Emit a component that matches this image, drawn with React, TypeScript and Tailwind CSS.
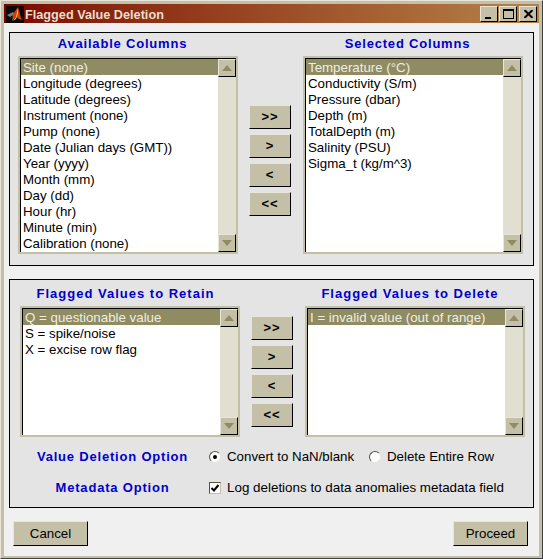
import type { ReactNode } from 'react'

const columns = [
  'Site (none)',
  'Longitude (degrees)',
  'Latitude (degrees)',
  'Instrument (none)',
  'Pump (none)',
  'Date (Julian days (GMT))',
  'Year (yyyy)',
  'Month (mm)',
  'Day (dd)',
  'Hour (hr)',
  'Minute (min)',
  'Calibration (none)',
]
const selected = [
  'Temperature (°C)',
  'Conductivity (S/m)',
  'Pressure (dbar)',
  'Depth (m)',
  'TotalDepth (m)',
  'Salinity (PSU)',
  'Sigma_t (kg/m^3)',
]
const retain = ['Q = questionable value', 'S = spike/noise', 'X = excise row flag']
const remove = ['I = invalid value (out of range)']

function Raised({ className, children }: { className: string; children?: ReactNode }) {
  return (
    <div className={`flex items-center justify-center bg-[#c4c0a8] border border-t-[#e8e6da] border-l-[#e8e6da] border-r-black border-b-black ${className}`}>
      {children}
    </div>
  )
}

function ListBox({ items, className }: { items: string[]; className: string }) {
  return (
    <div className={`border-2 border-[#c4c0a8] bg-white flex ${className}`}>
      <div className="flex-1 border-l border-t border-black min-w-0 overflow-hidden">
        {items.map((item, i) => (
          <div
            key={item}
            className={`h-4 leading-[18px] pl-[2px] text-[13.3px] whitespace-nowrap ${i === 0 ? 'bg-[#8f8b63] text-[#f0eee0]' : 'text-black'}`}
          >
            {item}
          </div>
        ))}
      </div>
      <div className="w-[18px] bg-[#e0dfd0] flex flex-col justify-between border-t border-black">
        <Raised className="h-[18px] w-[18px]">
          <svg width="10" height="6" viewBox="0 0 10 6"><path d="M5 0L10 6H0Z" fill="#8f8b63" /></svg>
        </Raised>
        <Raised className="h-[18px] w-[18px]">
          <svg width="10" height="6" viewBox="0 0 10 6"><path d="M0 0H10L5 6Z" fill="#8f8b63" /></svg>
        </Raised>
      </div>
    </div>
  )
}

function Heading({ children, className = '' }: { children: ReactNode; className?: string }) {
  return <div className={`text-center font-bold text-[13px] leading-4 text-[#0000cc] whitespace-nowrap ${className}`}>{children}</div>
}

function Arrows({ className }: { className: string }) {
  return (
    <div className={`flex flex-col gap-[5px] w-[42px] ${className}`}>
      {['>>', '>', '<', '<<'].map((a) => (
        <Raised key={a} className="h-6 w-[42px] font-bold text-[13px] text-black tracking-[1px]">
          {a}
        </Raised>
      ))}
    </div>
  )
}

function MatlabIcon() {
  return (
    <svg width="18" height="17" viewBox="0 0 18 17" className="shrink-0">
      <rect width="18" height="17" fill="#0a0a0a" />
      <path d="M1 9L7 6L9 8L4 11Z" fill="#6f7f88" />
      <path d="M7 8L12 1L15 12L17 14L13 13L10 11L6 15Z" fill="#d23c10" />
      <path d="M12 2L10 11L7 15L10 13L12 7Z" fill="#f4e020" />
    </svg>
  )
}

export default function App() {
  return (
    <div
      className="w-[543px] h-[559px] flex flex-col bg-[#c4c0a8] border-t border-l border-t-[#e8e6da] border-l-[#e8e6da] border-r border-b border-r-[#404040] border-b-[#404040] p-[3px] pb-[2px] overflow-hidden"
      style={{ fontFamily: '"Liberation Sans", Arial, sans-serif' }}
    >
      <div className="h-[19px] shrink-0 flex items-center pt-[1px] pl-[2px] pr-[2px] gap-[1px] bg-gradient-to-r from-[#7c0000] to-[#b58248]">
        <MatlabIcon />
        <span className="flex-1 font-bold text-[12.7px] leading-[18px] pt-[1px] text-[#e8dfcc]">Flagged Value Deletion</span>
        <div className="flex gap-[1px]">
          <Raised className="h-[16px] w-[18px]">
            <span className="w-[6px] h-[2px] bg-black mt-[7px] -ml-[2px]" />
          </Raised>
          <Raised className="h-[16px] w-[18px]">
            <span className="w-[11px] h-[10px] border border-t-2 border-black" />
          </Raised>
          <Raised className="h-[16px] w-[18px] ml-[1px]">
            <svg width="9" height="8" viewBox="0 0 9 8"><path d="M0.5 0L8.5 8M8.5 0L0.5 8" stroke="#000" strokeWidth="2" /></svg>
          </Raised>
        </div>
      </div>

      <div className="flex-1 bg-[#f0f0f0] px-[5px] pt-[9px] flex flex-col">
        <div className="h-[234px] border border-black bg-[#e4e4e4] pl-[8px] pt-[3px] grid grid-cols-[220px_65px_220px] pr-[8px]">
          <div className="flex flex-col">
            <Heading className="h-[20px] pr-[11px] tracking-[0.8px]">Available Columns</Heading>
            <ListBox items={columns} className="h-[198px]" />
          </div>
          <Arrows className="ml-[11px] mt-[69px]" />
          <div className="flex flex-col">
            <Heading className="h-[20px] pr-[11px] tracking-[0.8px]">Selected Columns</Heading>
            <ListBox items={selected} className="h-[198px]" />
          </div>
        </div>

        <div className="h-[229px] mt-[13px] border border-black bg-[#e4e4e4] pl-[10px] pr-[6px] pt-[6px]">
          <div className="grid grid-cols-[220px_65px_220px]">
            <div className="flex flex-col">
              <Heading className="h-[20px] pr-[9px] tracking-[1px]">Flagged Values to Retain</Heading>
              <ListBox items={retain} className="h-[131px]" />
            </div>
            <Arrows className="ml-[11px] mt-[30px]" />
            <div className="flex flex-col">
              <Heading className="h-[20px] pr-[10px] tracking-[1px]">Flagged Values to Delete</Heading>
              <ListBox items={remove} className="h-[131px]" />
            </div>
          </div>

          <div className="flex items-center h-[16px] mt-[12px]">
            <Heading className="w-[184px] -ml-[2px] pl-[5px] tracking-[0.8px]">Value Deletion Option</Heading>
            <span className="ml-[7px] w-[12px] h-[12px] rounded-full bg-white border border-t-[#55533f] border-l-[#55533f] border-r-[#e8e6da] border-b-[#e8e6da] flex items-center justify-center">
              <span className="w-[4px] h-[4px] rounded-full bg-black" />
            </span>
            <span className="ml-[6px] w-[142px] text-[13.3px] text-black">Convert to NaN/blank</span>
            <span className="w-[12px] h-[12px] rounded-full bg-white border border-t-[#55533f] border-l-[#55533f] border-r-[#e8e6da] border-b-[#e8e6da]" />
            <span className="ml-[6px] text-[13.3px] text-black">Delete Entire Row</span>
          </div>
          <div className="flex items-center h-[16px] mt-[15px]">
            <Heading className="w-[184px] -ml-[2px] pl-[5px] tracking-[0.8px]">Metadata Option</Heading>
            <span className="ml-[7px] w-[12px] h-[12px] bg-white border border-t-[#55533f] border-l-[#55533f] border-r-[#c4c0a8] border-b-[#c4c0a8] flex items-center justify-center">
              <svg width="8" height="8" viewBox="0 0 8 8"><path d="M0.5 4L3 6.5L7.5 1" fill="none" stroke="#000" strokeWidth="2" /></svg>
            </span>
            <span className="ml-[6px] text-[13.4px] text-black whitespace-nowrap">Log deletions to data anomalies metadata field</span>
          </div>
        </div>

        <div className="flex justify-between mt-[13px] pl-[4px] pr-[6px]">
          <Raised className="w-[75px] h-[25px] text-[13.3px] text-black">Cancel</Raised>
          <Raised className="w-[75px] h-[25px] text-[13.3px] text-black">Proceed</Raised>
        </div>
      </div>
    </div>
  )
}
